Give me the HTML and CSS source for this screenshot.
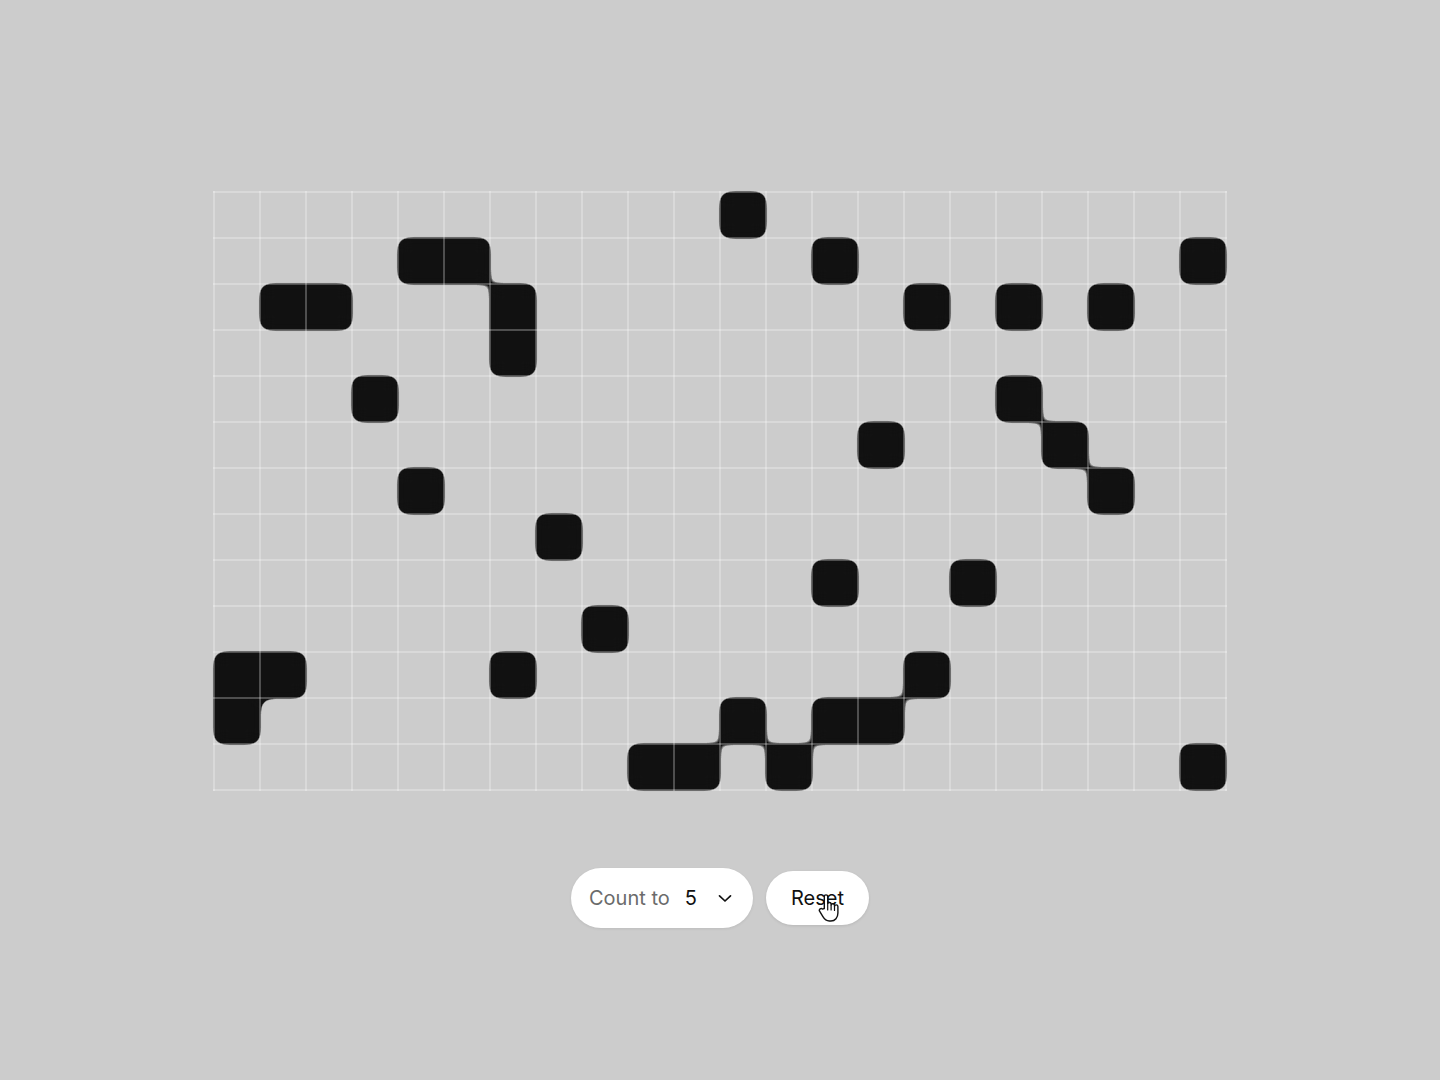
FILE: index.html
```html
<!DOCTYPE html>
<html lang="en">
<head>
<meta charset="utf-8">
<title>Count grid</title>
<link rel="stylesheet" href="styles.css">
</head>
<body>
<svg class="defs" width="0" height="0" aria-hidden="true">
  <defs>
    <filter id="goo" x="-5%" y="-5%" width="110%" height="110%" color-interpolation-filters="sRGB">
      <feGaussianBlur in="SourceGraphic" stdDeviation="7" result="blur"/>
      <feColorMatrix in="blur" type="matrix" values="1 0 0 0 0  0 1 0 0 0  0 0 1 0 0  0 0 0 14 -5.8"/>
    </filter>
  </defs>
</svg>
<main class="page">
  <div class="board">
    <div class="cells" id="cells"></div>
    <div class="lines"></div>
  </div>
  <div class="controls">
    <div class="select">
      <span class="label">Count to</span>
      <span class="value">5</span>
      <svg class="chev" width="14" height="9" viewBox="0 0 14 9"><path d="M1.5 1.8 L7 7 L12.5 1.8" fill="none" stroke="#111" stroke-width="1.7" stroke-linecap="round" stroke-linejoin="round"/></svg>
    </div>
    <button class="reset">Reset
      <svg class="cursor" width="22" height="30" viewBox="0 0 22 30">
        <path d="M6.3 15.5 V3.6 a1.7 1.7 0 0 1 3.4 0 V11.2 a1.7 1.7 0 0 1 3.4 0 V12.4 a1.7 1.7 0 0 1 3.4 0 V13.6 a1.7 1.7 0 0 1 3.4 0 V20 c0 4.6-2.8 8-7 8 h-1.6 c-3.2 0-4.8-1.6-6.4-4.3 L1.6 18.2 a1.8 1.8 0 0 1 2.9-2.1 Z" fill="#fff" stroke="#111" stroke-width="1.4" stroke-linejoin="round"/>
        <path d="M9.7 12 V17 M13.1 13 V17 M16.5 14 V17.5" stroke="#111" stroke-width="1.2" stroke-linecap="round"/>
      </svg>
    </button>
  </div>
</main>
<script src="script.js"></script>
</body>
</html>
```
FILE: styles.css
```css
* { box-sizing: border-box; }
html, body { margin: 0; padding: 0; }
body {
  background: #cccccc;
  font-family: Inter, "Liberation Sans", sans-serif;
  width: 1440px;
  height: 1080px;
  overflow: hidden;
}
.defs { position: absolute; }
.page {
  display: flex;
  flex-direction: column;
  align-items: center;
  padding-top: 192px;
  gap: 78px;
}
.board {
  position: relative;
  width: 1012px;
  height: 598px;
}
.cells {
  display: grid;
  grid-template-columns: repeat(22, 46px);
  grid-template-rows: repeat(13, 46px);
  width: 1012px;
  height: 598px;
  filter: url(#goo);
}
.cell.on { background: #111111; }
.lines {
  position: absolute;
  left: -1px;
  top: -1px;
  width: 1014px;
  height: 600px;
  pointer-events: none;
  background-image:
    linear-gradient(to right, rgba(255,255,255,0.26) 2px, transparent 2px),
    linear-gradient(to bottom, rgba(255,255,255,0.26) 2px, transparent 2px);
  background-size: 46px 46px;
}
.controls {
  display: flex;
  align-items: center;
  gap: 13px;
}
.select {
  height: 60px;
  width: 182px;
  border-radius: 30px;
  background: #ffffff;
  display: flex;
  align-items: center;
  padding: 0 0 0 18px;
  font-size: 20px;
  box-shadow: 0 1px 3px rgba(0,0,0,0.08);
}
.label { color: #6b6b6b; }
.value { color: #111; margin-left: 15px; }
.chev { margin-left: 21px; }
.reset {
  position: relative;
  height: 54px;
  width: 103px;
  border: none;
  border-radius: 27px;
  background: #ffffff;
  font-family: Inter, "Liberation Sans", sans-serif;
  font-size: 20px;
  color: #111;
  padding: 0;
  box-shadow: 0 1px 3px rgba(0,0,0,0.1);
}
.cursor {
  position: absolute;
  left: 52px;
  top: 22px;
}
```
FILE: script.js
```js
var filled = {
  0: [11],
  1: [4, 5, 13, 21],
  2: [1, 2, 6, 15, 17, 19],
  3: [6],
  4: [3, 17],
  5: [14, 18],
  6: [4, 19],
  7: [7],
  8: [13, 16],
  9: [8],
  10: [0, 1, 6, 15],
  11: [0, 11, 13, 14],
  12: [9, 10, 12, 21]
};
var wrap = document.getElementById('cells');
for (var r = 0; r < 13; r++) {
  for (var c = 0; c < 22; c++) {
    var d = document.createElement('div');
    d.className = 'cell' + (filled[r].indexOf(c) >= 0 ? ' on' : '');
    wrap.appendChild(d);
  }
}
```
